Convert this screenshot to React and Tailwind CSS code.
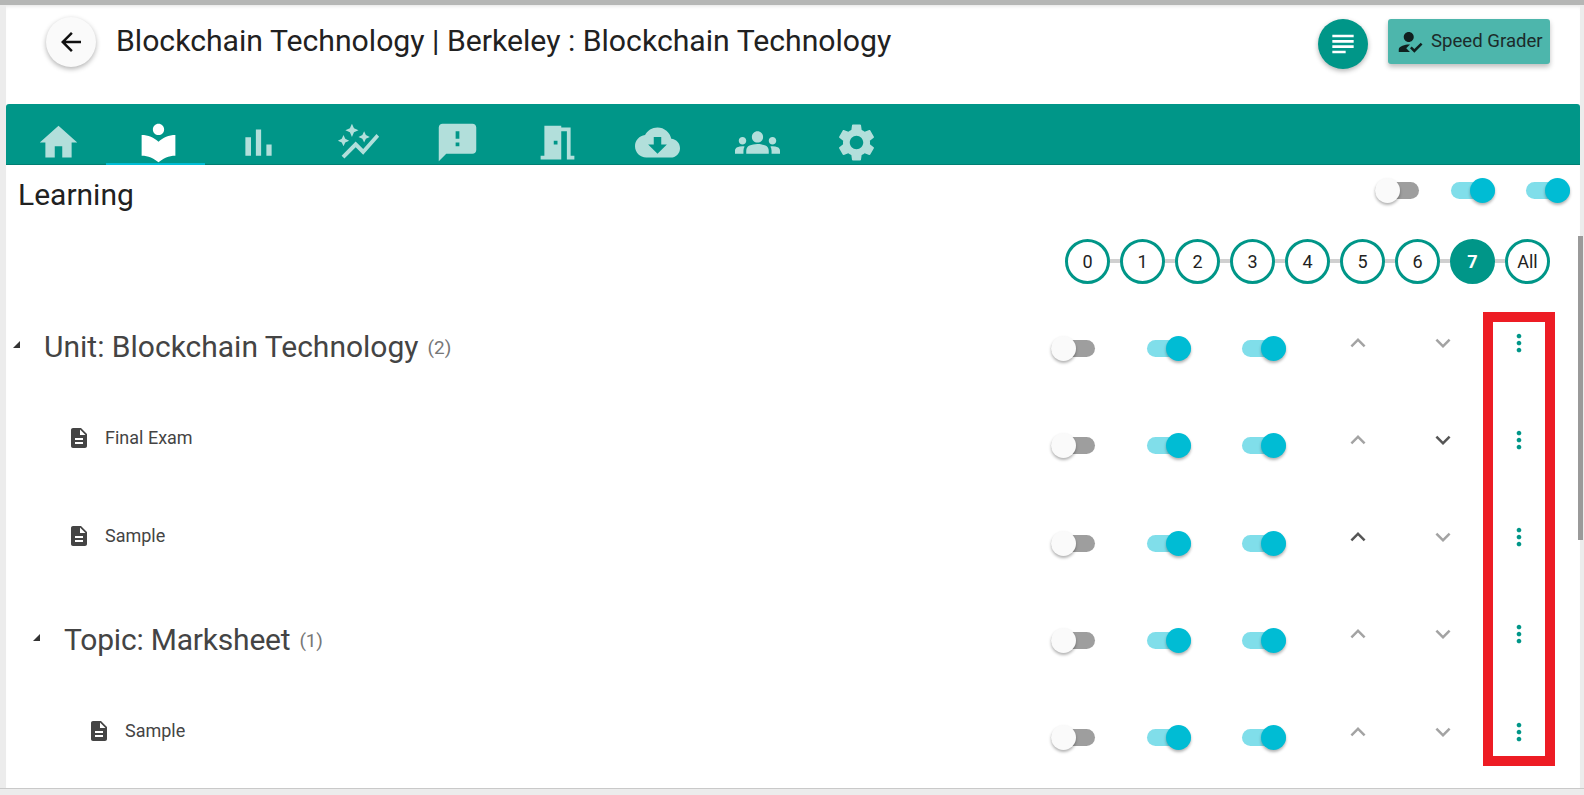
import React from 'react';

const ICONS = {
  home: 'M10 20v-6h4v6h5v-8h3L12 3 2 12h3v8z',
  library: 'M12 11.55C9.64 9.35 6.48 8 3 8v11c3.48 0 6.64 1.35 9 3.55 2.36-2.19 5.52-3.55 9-3.55V8c-3.48 0-6.64 1.35-9 3.55zM12 8c1.66 0 3-1.34 3-3s-1.34-3-3-3-3 1.34-3 3 1.34 3 3 3z',
  bars: 'M5 9.2h3V19H5zM10.6 5h2.8v14h-2.8zm5.6 8H19v6h-2.8z',
  graph: 'M14.06 9.94 12 9l2.06-.94L15 6l.94 2.06L18 9l-2.06.94L15 12zM4 14l.94-2.06L7 11l-2.06-.94L4 8l-.94 2.06L1 11l2.06.94zm4.5-5 1.09-2.41L12 5.5l-2.41-1.09L8.5 2 7.41 4.41 5 5.5l2.41 1.09zm-4 11.5 6-6.01 4 4L23 8.93l-1.41-1.41-7.09 7.97-4-4L3 19z',
  feedback: 'M20 2H4c-1.1 0-1.99.9-1.99 2L2 22l4-4h14c1.1 0 2-.9 2-2V4c0-1.1-.9-2-2-2zm-7 12h-2v-2h2v2zm0-4h-2V6h2v4z',
  door: 'M14 6v15H3v-2h2V3h9v1h5v15h2v2h-4V6h-3zm-4 5v2h2v-2h-2z',
  cloud: 'M19.35 10.04C18.67 6.59 15.64 4 12 4 9.11 4 6.6 5.64 5.35 8.04 2.34 8.36 0 10.91 0 14c0 3.31 2.69 6 6 6h13c2.76 0 5-2.24 5-5 0-2.64-2.05-4.78-4.65-4.96zM17 13l-5 5-5-5h3V9h4v4h3z',
  groups: 'M12 12.75c1.63 0 3.07.39 4.24.9 1.08.48 1.76 1.56 1.76 2.73V18H6v-1.61c0-1.18.68-2.26 1.76-2.73 1.17-.52 2.61-.91 4.24-.91zM4 13c1.1 0 2-.9 2-2s-.9-2-2-2-2 .9-2 2 .9 2 2 2zm1.13 1.1c-.37-.06-.74-.1-1.13-.1-.99 0-1.93.21-2.78.58C.48 14.9 0 15.62 0 16.43V18h4.5v-1.61c0-.83.23-1.61.63-2.29zM20 13c1.1 0 2-.9 2-2s-.9-2-2-2-2 .9-2 2 .9 2 2 2zm4 3.43c0-.81-.48-1.53-1.22-1.85-.85-.37-1.79-.58-2.78-.58-.39 0-.76.04-1.13.1.4.68.63 1.46.63 2.29V18H24v-1.57zM12 6c1.66 0 3 1.34 3 3s-1.34 3-3 3-3-1.34-3-3 1.34-3 3-3z',
  settings: 'M19.14 12.94c.04-.3.06-.61.06-.94 0-.32-.02-.64-.07-.94l2.03-1.58c.18-.14.23-.41.12-.61l-1.92-3.32c-.12-.22-.37-.29-.59-.22l-2.39.96c-.5-.38-1.03-.7-1.62-.94l-.36-2.54c-.04-.24-.24-.41-.48-.41h-3.84c-.24 0-.43.17-.47.41l-.36 2.54c-.59.24-1.13.57-1.62.94l-2.39-.96c-.22-.08-.47 0-.59.22L2.74 8.87c-.12.21-.08.47.12.61l2.03 1.58c-.05.3-.09.63-.09.94s.02.64.07.94l-2.03 1.58c-.18.14-.23.41-.12.61l1.92 3.32c.12.22.37.29.59.22l2.39-.96c.5.38 1.03.7 1.62.94l.36 2.54c.05.24.24.41.48.41h3.84c.24 0 .44-.17.47-.41l.36-2.54c.59-.24 1.13-.56 1.62-.94l2.39.96c.22.08.47 0 .59-.22l1.92-3.32c.12-.22.07-.47-.12-.61l-2.01-1.58zM12 15.6c-1.98 0-3.6-1.62-3.6-3.6s1.62-3.6 3.6-3.6 3.6 1.62 3.6 3.6-1.62 3.6-3.6 3.6z',
  file: 'M14 2H6c-1.1 0-1.99.9-1.99 2L4 20c0 1.1.89 2 1.99 2H18c1.1 0 2-.9 2-2V8l-6-6zm2 16H8v-2h8v2zm0-4H8v-2h8v2zm-3-5V3.5L18.5 9H13z',
  notes: 'M14 17H4v2h10v-2zm6-8H4v2h16V9zM4 15h16v-2H4v2zM4 5v2h16V5H4z',
  grader: 'M9 17l3-2.94c-.39-.04-.68-.06-1-.06-2.67 0-8 1.34-8 4v2h9l-3-3zm2-5c2.21 0 4-1.79 4-4s-1.79-4-4-4-4 1.79-4 4 1.79 4 4 4M15.47 20.5L12 17l1.4-1.41 2.07 2.08 5.13-5.17 1.4 1.41z',
  more: 'M12 8c1.1 0 2-.9 2-2s-.9-2-2-2-2 .9-2 2 .9 2 2 2zm0 2c-1.1 0-2 .9-2 2s.9 2 2 2 2-.9 2-2-.9-2-2-2zm0 6c-1.1 0-2 .9-2 2s.9 2 2 2 2-.9 2-2-.9-2-2-2z',
  back: 'M20 11H7.83l5.59-5.59L12 4l-8 8 8 8 1.41-1.41L7.83 13H20v-2z',
  up: 'M7.41 15.41L12 10.83l4.59 4.58L18 14l-6-6-6 6z',
  down: 'M7.41 8.59L12 13.17l4.59-4.58L18 10l-6 6-6-6z',
};

const TABS = ['home', 'library', 'bars', 'graph', 'feedback', 'door', 'cloud', 'groups', 'settings'];
const STEPS = ['0', '1', '2', '3', '4', '5', '6', '7', 'All'];

const ROWS = [
  { title: 'Unit: Blockchain Technology', count: 2, pad: 'pl-[7px] mb-[5px]' },
  { title: 'Final Exam', pad: 'pl-[61px] mb-[15px]', downOn: true },
  { title: 'Sample', pad: 'pl-[61px] mb-[15px]', upOn: true },
  { title: 'Topic: Marksheet', count: 1, pad: 'pl-[27px] mb-[2px] tracking-[-0.2px]' },
  { title: 'Sample', pad: 'pl-[81px] mb-[13px]' },
];

function Icon({ name, className }) {
  return (
    <svg viewBox="0 0 24 24" fill="currentColor" className={`shrink-0 ${className}`}>
      <path d={ICONS[name]} />
    </svg>
  );
}

function Toggle({ on, className = '' }) {
  return (
    <span className={`relative block h-[17px] w-11 shrink-0 rounded-full ${on ? 'bg-[#80deea]' : 'bg-[#9e9e9e]'} ${className}`}>
      <span
        className={`absolute top-[-4px] size-[25px] rounded-full shadow-[0_2px_3px_rgba(0,0,0,0.3)] ${
          on ? 'right-0 bg-[#00bcd4]' : 'left-0 bg-[#fafafa]'
        }`}
      />
    </span>
  );
}

function Row({ row }) {
  const isHeading = row.count !== undefined;
  return (
    <div className="flex h-[97.25px] items-center">
      <div className={`flex flex-1 items-center ${row.pad}`}>
        {isHeading ? (
          <>
            <span className="mb-1 h-0 w-0 border-b-[7px] border-l-[7px] border-b-[#333] border-l-transparent" />
            <span className="ml-[24px] text-[30px] text-[#444]">{row.title}</span>
            <span className="mt-1 ml-[9px] text-[19px] text-[#777]">({row.count})</span>
          </>
        ) : (
          <>
            <Icon name="file" className="size-6 text-[#444]" />
            <span className="ml-[14px] text-lg text-[#444]">{row.title}</span>
          </>
        )}
      </div>
      <div className="flex items-center pr-[47px]">
        <Toggle className="mr-px" />
        <Toggle on className="ml-[51px]" />
        <Toggle on className="ml-[51px]" />
        <Icon name="up" className={`mb-[12px] ml-[57px] size-[30px] ${row.upOn ? 'text-[#555]' : 'text-[#a3a3a3]'}`} />
        <Icon name="down" className={`mb-[12px] ml-[55px] size-[30px] ${row.downOn ? 'text-[#555]' : 'text-[#a3a3a3]'}`} />
        <Icon name="more" className="mb-[12px] ml-[47px] size-7 text-[#009688]" />
      </div>
    </div>
  );
}

export default function App() {
  return (
    <div className="relative flex h-[795px] w-[1584px] flex-col overflow-hidden bg-[#ececec] font-['Roboto',sans-serif] text-[#212121]">
      <div className="h-[5px] shrink-0 bg-[#b5b6b5]" />

      <div className="flex min-h-0 flex-1">
        <div className="relative ml-[6px] flex-1 bg-white shadow-[inset_0_4px_4px_-3px_rgba(0,0,0,0.12)]">
          {/* Header */}
          <header className="flex h-[99px] items-start pl-[40px]">
            <button className="mt-3 flex size-[50px] items-center justify-center rounded-full bg-[#fafafa] text-[#111] shadow-[0_2px_5px_rgba(0,0,0,0.3)]">
              <Icon name="back" className="size-[30px]" />
            </button>
            <h1 className="mt-[15px] ml-5 text-[30.2px] leading-[42px] font-normal">Blockchain Technology | Berkeley : Blockchain Technology</h1>
            <div className="mt-[14px] mr-[30px] ml-auto flex items-start gap-5">
              <button className="flex size-[50px] items-center justify-center rounded-full bg-[#009688] text-white shadow-[0_2px_5px_rgba(0,0,0,0.3)]">
                <Icon name="notes" className="size-8" />
              </button>
              <button className="flex h-[45px] w-[162px] items-center gap-[6px] rounded-[3px] bg-[#4db6ac] pl-[7px] text-[18.6px] whitespace-nowrap text-[#1c2b2a] shadow-[0_3px_5px_rgba(0,0,0,0.25)]">
                <Icon name="grader" className="size-[30px] text-[#10201f]" />
                Speed Grader
              </button>
            </div>
          </header>

          {/* Tabs */}
          <nav className="flex h-[61px] rounded-t-[3px] bg-[#009688] pl-[3px] shadow-[inset_0_-1px_0_rgba(0,0,0,0.15)]">
            {TABS.map((tab, i) => (
              <div
                key={tab}
                className={`relative flex h-[61px] w-[99.75px] items-center justify-center pt-[18px] pb-[2px] ${
                  i === 1 ? 'text-white' : 'text-[#b2dfdb]'
                }`}
              >
                <Icon name={tab} className="size-[45px]" />
                {i === 1 && <span className="absolute bottom-0 left-[-3px] h-[2px] w-[99px] bg-[#00bcd4]" />}
              </div>
            ))}
          </nav>

          {/* Learning heading */}
          <div className="flex h-[50px] items-center justify-between pr-[10px] pl-[12px]">
            <h2 className="mt-2 text-[30px] font-normal">Learning</h2>
            <div className="flex items-center gap-8">
              <Toggle />
              <Toggle on />
              <Toggle on className="ml-[-1px]" />
            </div>
          </div>

          {/* Level stepper */}
          <div className="flex h-[85px] items-start justify-end pt-6 pr-[30px]">
            {STEPS.map((step, i) => (
              <React.Fragment key={step}>
                {i > 0 && <span className="mt-5 h-1 w-[10px] bg-[#d0d0d0]" />}
                <span
                  className={`flex size-[45px] items-center justify-center rounded-full border-[3px] border-[#009688] text-lg ${
                    step === '7' ? 'bg-[#009688] font-bold text-white' : 'bg-white text-[#222]'
                  }`}
                >
                  {step}
                </span>
              </React.Fragment>
            ))}
          </div>

          {ROWS.map((row, i) => (
            <Row key={i} row={row} />
          ))}

          {/* Red annotation around the row menus */}
          <div className="absolute top-[307px] left-[1477px] h-[454px] w-[72px] border-[10px] border-[#ed1c24]" />

          {/* Scrollbar thumb sits over the page edge */}
          <div className="absolute top-[231px] right-[-3px] h-[304px] w-[5px] bg-[#9a9a9a]" />
        </div>

        <div className="w-1 bg-[#ececec]" />
      </div>

      <div className="h-[7px] shrink-0 border-t border-[#c9c9c9] bg-[#ececec]" />
    </div>
  );
}
